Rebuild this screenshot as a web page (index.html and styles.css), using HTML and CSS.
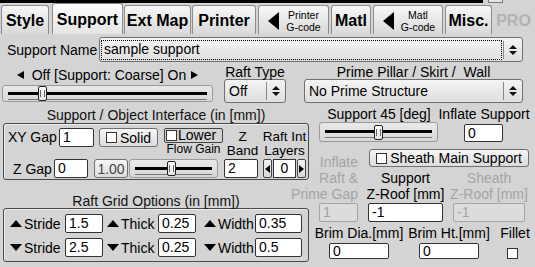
FILE: index.html
```html
<!DOCTYPE html>
<html lang="en">
<head>
    <meta charset="UTF-8">
    <meta name="viewport" content="width=device-width, initial-scale=1.0">
    <title>Support</title>
    <link rel="stylesheet" href="styles.css">
</head>
<body>
    <div class="topbar"><div class="strip"></div><div class="knob"></div></div>

    <div class="tabs">
        <div class="tab t-style">Style</div>
        <div class="tab active t-support">Support</div>
        <div class="tab t-ext">Ext Map</div>
        <div class="tab t-printer">Printer</div>
        <div class="tab gtab t-pg"><span class="tri-big"></span><span class="small">Printer<br>G-code</span></div>
        <div class="tab t-matl">Matl</div>
        <div class="tab gtab t-mg"><span class="tri-big"></span><span class="small">Matl<br>G-code</span></div>
        <div class="tab t-misc">Misc.</div>
        <div class="tab pro">PRO</div>
    </div>

    <div class="name-row">
        <label class="name-label">Support Name</label>
        <div class="select name-select"><span class="focus">sample support</span><span class="arrows"></span></div>
    </div>

    <div class="opts-row">
        <div class="level-col">
            <div class="level-cap"><span class="tri-l"></span>Off [Support: Coarse] On<span class="tri-r"></span></div>
            <div class="slider level-slider"><span class="thumb" style="margin-left:35px"></span></div>
        </div>
        <div class="raft-col">
            <div class="cap">Raft Type</div>
            <div class="select"><span class="val">Off</span><span class="arrows"></span></div>
        </div>
        <div class="prime-col">
            <div class="cap">Prime Pillar / Skirt /&nbsp; Wall</div>
            <div class="select"><span class="val">No Prime Structure</span><span class="arrows"></span></div>
        </div>
    </div>

    <div class="main">
        <div class="left">
            <div class="group-cap">Support / Object Interface (in [mm])</div>
            <div class="group iface">
                <div class="iface-top">
                    <label class="xy-lbl">XY Gap</label>
                    <div class="input xy-in">1</div>
                    <div class="btn solid-btn"><span class="check"></span>Solid</div>
                    <div class="lower-col">
                        <div class="flat-check"><span class="check"></span>Lower</div>
                        <div class="tiny">Flow Gain</div>
                    </div>
                    <div class="stack zband">Z<br>Band</div>
                    <div class="stack raftint">Raft Int<br>Layers</div>
                </div>
                <div class="iface-bottom">
                    <label class="zgap-lbl">Z Gap</label>
                    <div class="input zgap-in">0</div>
                    <div class="btn gain-btn">1.00</div>
                    <div class="slider gain-slider"><span class="thumb" style="margin-left:37px"></span></div>
                    <div class="input band-in">2</div>
                    <div class="spinner">
                        <span class="spin-btn"><span class="tri-ls"></span></span>
                        <span class="spin-val">0</span>
                        <span class="spin-btn"><span class="tri-rs"></span></span>
                    </div>
                </div>
            </div>

            <div class="group-cap raft-cap">Raft Grid Options (in [mm])</div>
            <div class="group grid">
                <div class="grid-row">
                    <label class="g-lbl stride"><span class="tri-up"></span>Stride</label>
                    <div class="input g-in">1.5</div>
                    <label class="g-lbl thick"><span class="tri-up"></span>Thick</label>
                    <div class="input g-in">0.25</div>
                    <label class="g-lbl width"><span class="tri-up"></span>Width</label>
                    <div class="input g-in g-wide">0.35</div>
                </div>
                <div class="grid-row">
                    <label class="g-lbl stride"><span class="tri-down"></span>Stride</label>
                    <div class="input g-in">2.5</div>
                    <label class="g-lbl thick"><span class="tri-down"></span>Thick</label>
                    <div class="input g-in">0.25</div>
                    <label class="g-lbl width"><span class="tri-down"></span>Width</label>
                    <div class="input g-in g-wide">0.5</div>
                </div>
            </div>
        </div>

        <div class="right">
            <div class="r-caps">
                <div class="s45-cap">Support 45 [deg]</div>
                <div class="inflate-cap">Inflate Support</div>
            </div>
            <div class="r-ctrls">
                <div class="slider s45-slider"><span class="thumb" style="margin-left:54px"></span></div>
                <div class="input inflate-in">0</div>
            </div>
            <div class="r-roofs">
                <div class="roof-first dim">
                    <div>Inflate</div>
                    <div>Raft &amp;</div>
                    <div>Prime Gap</div>
                    <div class="input off gap-in">1</div>
                </div>
                <div class="roof-rest">
                    <div class="btn sheath-btn"><span class="check"></span>Sheath Main Support</div>
                    <div class="roof-cols">
                        <div class="roof-col">
                            <div>Support</div>
                            <div>Z-Roof [mm]</div>
                            <div class="input roof-in">-1</div>
                        </div>
                        <div class="roof-col sheath-col dim">
                            <div>Sheath</div>
                            <div>Z-Roof [mm]</div>
                            <div class="input off roof-in">-1</div>
                        </div>
                    </div>
                </div>
            </div>
            <div class="brims">
                <div class="brim brim-dia">
                    <div>Brim Dia.[mm]</div>
                    <div class="input brim-in">0</div>
                </div>
                <div class="brim brim-ht">
                    <div>Brim Ht.[mm]</div>
                    <div class="input brim-in">0</div>
                </div>
                <div class="brim fillet">
                    <div>Fillet</div>
                    <span class="check fillet-check"></span>
                </div>
            </div>
        </div>
    </div>
</body>
</html>
```

FILE: styles.css
```css
* {
    box-sizing: border-box;
}
body {
    margin: 0;
    width: 535px;
    height: 267px;
    overflow: hidden;
    background-color: #d4d4d4;
    font-family: "Liberation Sans", Arial, sans-serif;
    font-size: 14px;
    color: #000;
}

/* top strip */
.topbar {
    display: flex;
    height: 3px;
}
.strip {
    width: 483px;
    background-color: #000;
}
.knob {
    width: 15px;
    margin-left: 5px;
    border: 1px solid #777;
    border-top: none;
    background-color: #e4e4e4;
}

/* tabs */
.tabs {
    display: flex;
    align-items: flex-end;
    height: 31px;
}
.tab {
    height: 29px;
    padding-top: 2px;
    margin-left: 2px;
    border: 1px solid #8c8c8c;
    border-bottom: none;
    border-radius: 3px 3px 0 0;
    background: linear-gradient(#f7f7f7, #d9d9d9);
    font-size: 16px;
    font-weight: bold;
    display: flex;
    align-items: center;
    justify-content: center;
}
.tab.active {
    height: 31px;
    background: linear-gradient(#fefefe, #e4e4e4);
}
.t-style { margin-left: 1px; width: 48px; }
.t-support { margin-left: 3px; width: 71px; }
.t-ext { margin-left: 1px; width: 67px; }
.t-printer { margin-left: 1px; width: 64px; }
.t-pg { width: 71px; }
.t-matl { width: 40px; }
.t-mg { width: 70px; }
.t-misc { width: 47px; }
.tab.pro {
    margin-left: 0;
    width: 43px;
    border: none;
    background: none;
    color: #b2b2b2;
}
.gtab {
    justify-content: flex-start;
}
.tri-big {
    margin-left: 9px;
    border-top: 9px solid transparent;
    border-bottom: 9px solid transparent;
    border-right: 11px solid #000;
}
.small {
    flex: 1;
    font-size: 10.5px;
    font-weight: normal;
    line-height: 12px;
    text-align: center;
}

/* selects */
.select {
    display: flex;
    align-items: center;
    height: 24px;
    border: 1px solid #707070;
    border-radius: 3px;
    background: linear-gradient(#f4f4f4, #dedede);
}
.select .val {
    flex: 1;
    padding-left: 4px;
}
.focus {
    flex: 1;
    height: 18px;
    margin-left: 2px;
    margin-right: 2px;
    padding-left: 2px;
    line-height: 16px;
    outline: 1px dotted #000;
}
.arrows {
    width: 19px;
    height: 18px;
    border-left: 1px solid #8a8a8a;
    display: flex;
    flex-direction: column;
    align-items: center;
    justify-content: center;
    gap: 2px;
}
.arrows::before {
    content: "";
    border-left: 4px solid transparent;
    border-right: 4px solid transparent;
    border-bottom: 4px solid #111;
}
.arrows::after {
    content: "";
    border-left: 4px solid transparent;
    border-right: 4px solid transparent;
    border-top: 4px solid #111;
}

.name-row {
    display: flex;
    align-items: center;
    height: 25px;
    margin-top: 3px;
}
.name-label {
    margin-left: 7px;
    width: 92px;
}
.name-select {
    width: 424px;
    height: 25px;
}

/* second row */
.opts-row {
    display: flex;
    height: 41px;
}
.level-col {
    margin-left: 2px;
    width: 211px;
}
.level-cap {
    margin-top: 6px;
    line-height: 14px;
    display: flex;
    align-items: center;
    justify-content: center;
}
.tri-l {
    margin-right: 8px;
    border-top: 4px solid transparent;
    border-bottom: 4px solid transparent;
    border-right: 7px solid #000;
}
.tri-r {
    margin-left: 5px;
    border-top: 4px solid transparent;
    border-bottom: 4px solid transparent;
    border-left: 7px solid #000;
}
.level-slider {
    margin-top: 3px;
    height: 17px;
}
.cap {
    margin-top: 3px;
    line-height: 14px;
    text-align: center;
    white-space: nowrap;
}
.raft-col {
    margin-left: 11px;
    width: 62px;
}
.prime-col {
    margin-left: 18px;
    width: 219px;
}

/* sliders */
.slider {
    position: relative;
    display: flex;
    align-items: center;
    border: 1px solid #9a9a9a;
    border-radius: 3px;
    background: linear-gradient(#e9e9e9, #d7d7d7);
}
.slider::before {
    content: "";
    position: absolute;
    left: 5px;
    right: 5px;
    top: 50%;
    margin-top: -2px;
    height: 4px;
    border-top: 3px solid #000;
    border-bottom: 1px solid #777;
}
.thumb {
    position: relative;
    width: 9px;
    height: 15px;
    border: 1px solid #222;
    border-radius: 2px;
    background: linear-gradient(#ffffff, #e2e2e2);
    display: flex;
    align-items: center;
    justify-content: center;
}
.thumb::before {
    content: "";
    width: 3px;
    height: 7px;
    border-left: 1px solid #666;
    border-right: 1px solid #666;
}

/* controls */
.input {
    height: 19px;
    border: 1px solid #333;
    border-radius: 2px;
    background-color: #fff;
    padding-left: 3px;
    line-height: 17px;
    white-space: nowrap;
}
.input.off {
    border-color: #a4a4a4;
    background-color: #dcdcdc;
    color: #a4a4a4;
}
.btn {
    height: 19px;
    border: 1px solid #707070;
    border-radius: 3px;
    background: linear-gradient(#f6f6f6, #dcdcdc);
    display: flex;
    align-items: center;
    justify-content: center;
    white-space: nowrap;
}
.check {
    display: inline-block;
    width: 11px;
    height: 11px;
    margin-right: 3px;
    border: 1px solid #333;
    background-color: #fff;
}

/* main section */
.main {
    display: flex;
}
.left {
    margin-left: 3px;
    width: 306px;
}
.group-cap {
    margin-top: 4px;
    line-height: 16px;
    text-align: center;
    color: #111;
}
.raft-cap {
    margin-top: 15px;
    line-height: 13px;
}
.group {
    border: 1px solid #4a4a4a;
    border-radius: 3px;
    box-shadow: inset 1px 1px 0 #ececec;
}
.iface {
    padding-top: 4px;
    padding-bottom: 1px;
}
.iface-top {
    display: flex;
    align-items: flex-start;
    height: 31px;
}
.xy-lbl {
    margin-left: 4px;
    width: 51px;
    line-height: 19px;
}
.xy-in { width: 35px; }
.solid-btn {
    margin-left: 5px;
    width: 59px;
}
.lower-col {
    margin-left: 6px;
    width: 59px;
}
.flat-check {
    height: 15px;
    border: 1px solid #444;
    border-radius: 2px;
    display: flex;
    align-items: center;
    padding-left: 1px;
    line-height: 13px;
}
.flat-check .check {
    margin-right: 1px;
}
.tiny {
    font-size: 12px;
    line-height: 13px;
    text-align: center;
    white-space: nowrap;
}
.stack {
    margin-top: 2px;
    margin-left: 3px;
    font-size: 13.5px;
    line-height: 13.5px;
    text-align: center;
    white-space: nowrap;
}
.zband { width: 33px; }
.raftint { width: 45px; }

.iface-bottom {
    display: flex;
    align-items: center;
    height: 19px;
}
.zgap-lbl {
    margin-left: 9px;
    width: 41px;
}
.zgap-in { width: 34px; }
.gain-btn {
    margin-left: 6px;
    width: 34px;
    color: #444;
}
.gain-slider {
    margin-left: 1px;
    width: 89px;
    height: 19px;
}
.band-in {
    margin-left: 6px;
    width: 34px;
}
.spinner {
    margin-left: 5px;
    width: 43px;
    height: 19px;
    display: flex;
}
.spin-btn {
    width: 9px;
    border: 1px solid #444;
    border-radius: 2px;
    background: linear-gradient(#f4f4f4, #d8d8d8);
    display: flex;
    align-items: center;
    justify-content: center;
}
.spin-val {
    width: 23px;
    margin: 0 1px;
    border: 1px solid #333;
    background-color: #fff;
    text-align: center;
    line-height: 17px;
}
.tri-ls {
    border-top: 4px solid transparent;
    border-bottom: 4px solid transparent;
    border-right: 5px solid #000;
}
.tri-rs {
    border-top: 4px solid transparent;
    border-bottom: 4px solid transparent;
    border-left: 5px solid #000;
}

/* raft grid */
.grid {
    padding-top: 5px;
    padding-bottom: 4px;
}
.grid-row {
    display: flex;
    align-items: center;
    height: 19px;
}
.grid-row + .grid-row {
    margin-top: 5px;
}
.g-lbl {
    display: flex;
    align-items: center;
    white-space: nowrap;
}
.stride { margin-left: 6px; width: 55px; }
.thick { margin-left: 4px; width: 51px; }
.width { margin-left: 8px; width: 51px; }
.g-in { width: 38px; }
.g-wide { width: 47px; }
.tri-up {
    margin-right: 2px;
    border-left: 6px solid transparent;
    border-right: 6px solid transparent;
    border-bottom: 7px solid #000;
}
.tri-down {
    margin-right: 2px;
    border-left: 6px solid transparent;
    border-right: 6px solid transparent;
    border-top: 7px solid #000;
}

/* right column */
.right {
    width: 226px;
}
.r-caps {
    display: flex;
    margin-top: 4px;
    line-height: 14px;
    white-space: nowrap;
}
.s45-cap {
    margin-left: 10px;
    width: 120px;
    text-align: center;
}
.inflate-cap {
    margin-left: -3px;
    width: 96px;
    text-align: center;
}
.r-ctrls {
    display: flex;
    align-items: flex-start;
    height: 21px;
}
.s45-slider {
    margin-top: 1px;
    margin-left: 10px;
    width: 119px;
    height: 20px;
}
.inflate-in {
    margin-top: 3px;
    margin-left: 26px;
    width: 39px;
    height: 18px;
    line-height: 16px;
}
.r-roofs {
    display: flex;
    align-items: flex-start;
    margin-top: 7px;
    line-height: 16px;
    white-space: nowrap;
}
.dim {
    color: #a4a4a4;
}
.roof-first {
    margin-top: 5px;
    margin-left: 9px;
    width: 40px;
    display: flex;
    flex-direction: column;
    align-items: flex-end;
}
.gap-in {
    margin-top: 1px;
    width: 39px;
}
.roof-rest {
    margin-left: 10px;
}
.sheath-btn {
    margin-left: 1px;
    width: 160px;
    height: 18px;
}
.roof-cols {
    display: flex;
    margin-top: 3px;
}
.roof-col {
    width: 75px;
    display: flex;
    flex-direction: column;
    align-items: center;
}
.sheath-col {
    margin-left: 10px;
    width: 72px;
}
.roof-in {
    margin-top: 1px;
    width: 100%;
}
.brims {
    display: flex;
    align-items: flex-start;
    margin-top: 4px;
    line-height: 14px;
    white-space: nowrap;
}
.brim {
    display: flex;
    flex-direction: column;
    align-items: center;
}
.brim-dia { margin-left: 5px; width: 90px; }
.brim-ht { margin-left: 5px; width: 80px; }
.brim-in {
    margin-top: 3px;
    width: 60px;
    height: 16px;
    line-height: 14px;
}
.fillet {
    margin-left: 11px;
    width: 30px;
}
.fillet-check {
    align-self: flex-start;
    margin-top: 8px;
    margin-left: 7px;
}
```
